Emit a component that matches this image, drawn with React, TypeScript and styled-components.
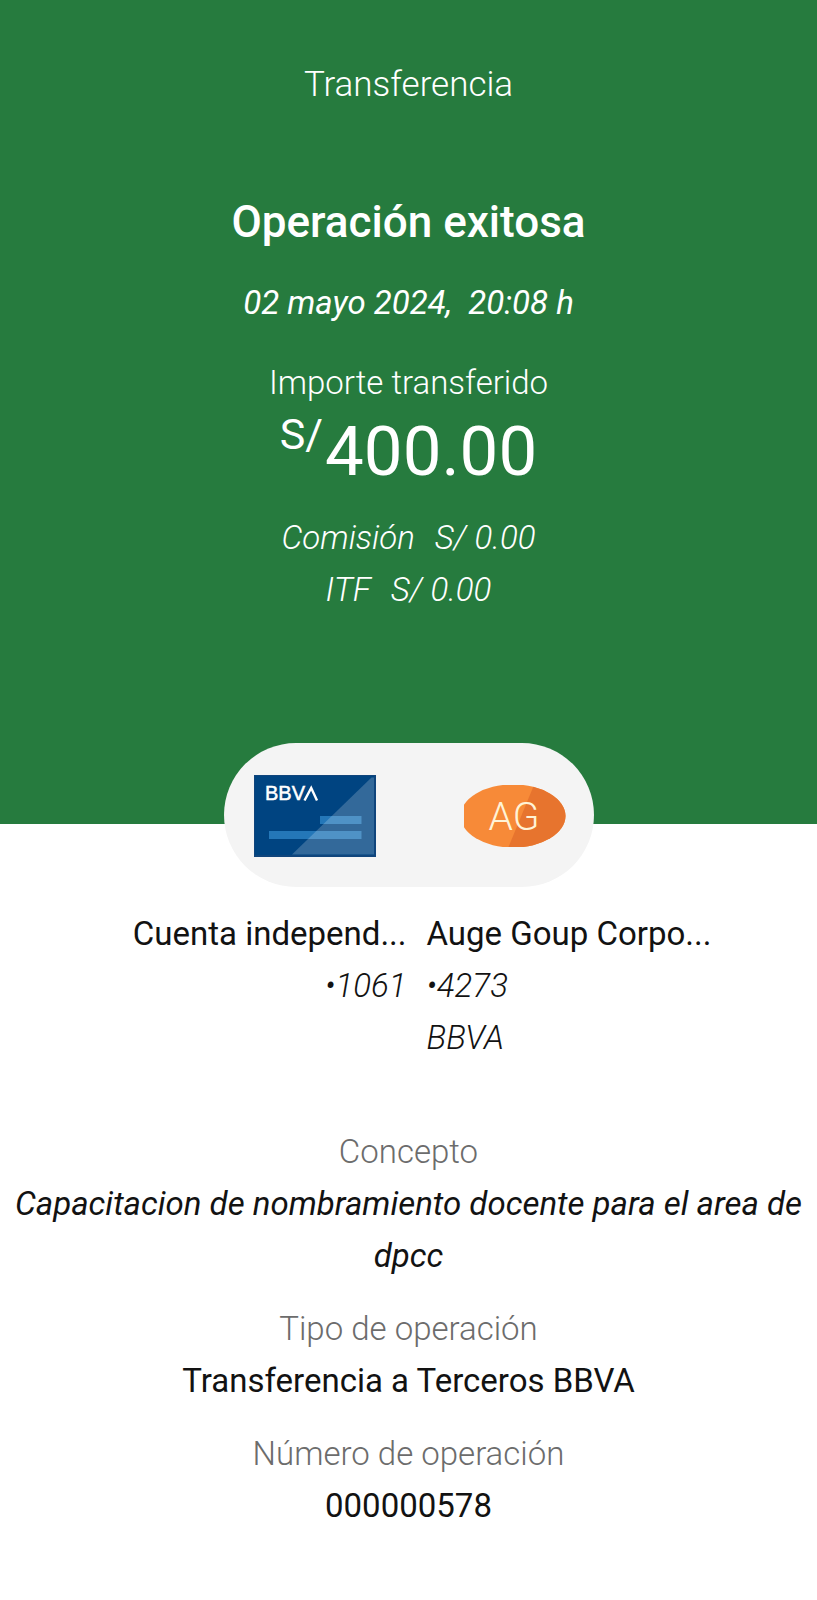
import React from "react";
import styled, { createGlobalStyle } from "styled-components";

const GlobalStyle = createGlobalStyle`
  body { margin: 0; background: #fff; font-family: Roboto, sans-serif; color: #121212; }
  * { box-sizing: border-box; }
  h1, h2, p, dl, dt, dd { margin: 0; font-weight: 400; }
`;

const Page = styled.main`
  min-height: 100vh;
`;

const Header = styled.header`
  display: flex;
  flex-direction: column;
  align-items: center;
  padding: 59px 20px 208px;
  background: #267b3e;
  color: #fff;
  text-align: center;
`;

const Title = styled.h1`
  font-size: 35px;
  line-height: 52px;
  font-weight: 300;
`;

const Status = styled.h2`
  margin-top: 83px;
  font-size: 44px;
  line-height: 56px;
  font-weight: 500;
`;

const Line = styled.p<{ $top?: number; $light?: boolean; $italic?: boolean }>`
  margin-top: ${(p) => p.$top ?? 0}px;
  font-size: 33px;
  line-height: 52px;
  font-weight: ${(p) => (p.$light ? 300 : 400)};
  font-style: ${(p) => (p.$italic ? "italic" : "normal")};
  white-space: pre-wrap;
`;

const Fee = styled(Line)`
  display: flex;
  gap: 20px;
`;

const Amount = styled.p`
  display: flex;
  align-items: flex-start;
  gap: 2px;
  font-size: 69px;
  line-height: 86px;
`;

const Currency = styled.span`
  font-size: 43px;
  line-height: 50px;
`;

const Route = styled.div`
  display: flex;
  align-items: center;
  justify-content: space-between;
  max-width: 370px;
  height: 144px;
  margin: -81px auto 0;
  padding: 2px 28px 0 30px;
  border-radius: 72px;
  background: #f4f4f4;
`;

const Drawing = styled.svg`
  display: block;
  flex: none;
`;

const Parties = styled.section`
  display: grid;
  grid-template-columns: 1fr 1fr;
  gap: 20px;
  padding: 21px 0 0 16px;
`;

const Party = styled.div<{ $end?: boolean }>`
  text-align: ${(p) => (p.$end ? "right" : "left")};
`;

const Details = styled.dl`
  display: flex;
  flex-direction: column;
  gap: 21px;
  padding: 62px 12px 60px;
  text-align: center;
  font-size: 33px;
  line-height: 52px;
`;

const Term = styled.dt`
  font-weight: 300;
  color: #6c6c6c;
`;

const Value = styled.dd<{ $italic?: boolean }>`
  font-style: ${(p) => (p.$italic ? "italic" : "normal")};
`;

function BankCard() {
  return (
    <Drawing width="122" height="82" viewBox="0 0 122 82" role="img" aria-label="BBVA">
      <rect width="122" height="82" fill="#10457c" />
      <rect x="1" y="1" width="119" height="79" fill="#004481" />
      <rect x="66" y="41" width="41.5" height="8" fill="#2477b8" />
      <rect x="15" y="56" width="92.5" height="8" fill="#2477b8" />
      <path d="M38 79.5 117.5 2.5H120V79.5Z" fill="#fff" fillOpacity="0.2" />
      <text x="11" y="25" fill="#fff" stroke="#fff" strokeWidth="0.5" fontFamily="Liberation Sans, sans-serif" fontSize="20">BBV</text>
      <path d="M50.500 25.500 57.200 13 63 25.500" fill="none" stroke="#fff" strokeWidth="2.4" />
    </Drawing>
  );
}

function Avatar() {
  return (
    <Drawing width="102" height="62" viewBox="0 0 102 62">
      <defs>
        <clipPath id="avatar-shape">
          <ellipse cx="49" cy="31" rx="52.5" ry="31.6" />
        </clipPath>
      </defs>
      <g clipPath="url(#avatar-shape)">
        <rect width="102" height="62" fill="#f78a38" />
        <path d="M70 0H102V62H44.500Z" fill="#e7742e" />
      </g>
      <text x="50" y="45" textAnchor="middle" fill="#fff3d6" fontFamily="Roboto, sans-serif" fontWeight="300" fontSize="39">AG</text>
    </Drawing>
  );
}

export default function App() {
  return (
    <Page>
      <GlobalStyle />
      <Header>
        <Title>Transferencia</Title>
        <Status>Operación exitosa</Status>
        <Line $top={27} $italic>{"02 mayo 2024,  20:08 h"}</Line>
        <Line $top={28} $light>Importe transferido</Line>
        <Amount><Currency>S/</Currency><span>400.00</span></Amount>
        <Fee $top={17} $light $italic><span>Comisión</span><span>S/ 0.00</span></Fee>
        <Fee $light $italic><span>ITF</span><span>S/ 0.00</span></Fee>
      </Header>
      <Route>
        <BankCard />
        <Avatar />
      </Route>
      <Parties>
        <Party $end>
          <Line>Cuenta independ...</Line>
          <Line $light $italic>•1061</Line>
        </Party>
        <Party>
          <Line>Auge Goup Corpo...</Line>
          <Line $light $italic>•4273</Line>
          <Line $light $italic>BBVA</Line>
        </Party>
      </Parties>
      <Details>
        <div>
          <Term>Concepto</Term>
          <Value $italic>Capacitacion de nombramiento docente para el area de dpcc</Value>
        </div>
        <div>
          <Term>Tipo de operación</Term>
          <Value>Transferencia a Terceros BBVA</Value>
        </div>
        <div>
          <Term>Número de operación</Term>
          <Value>000000578</Value>
        </div>
      </Details>
    </Page>
  );
}
